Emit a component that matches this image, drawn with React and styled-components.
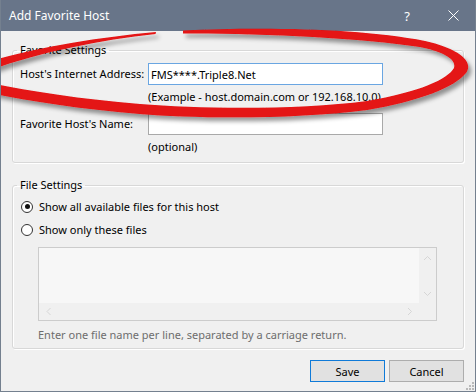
import React from 'react'
import styled, { createGlobalStyle } from 'styled-components'

const GlobalStyle = createGlobalStyle`
  html, body {
    margin: 0;
    padding: 0;
    background: #f0f0f0;
  }
  body {
    font-family: "Noto Sans", "Open Sans", sans-serif;
    font-size: 11px;
    color: #000;
  }
`

const Window = styled.div`
  position: relative;
  width: 476px;
  height: 392px;
  box-sizing: border-box;
  border: 1px solid #74808f;
  border-top: none;
  background: #f0f0f0;
  display: flex;
  flex-direction: column;
  overflow: hidden;
`

const TitleBar = styled.div`
  height: 31px;
  margin: 0 -1px;
  display: flex;
  align-items: center;
  background: #687589;
  color: #fff;
  font-size: 12px;
`

const Title = styled.div`
  flex: 1;
  padding-left: 9px;
`

const CaptionButton = styled.div`
  width: 46px;
  height: 31px;
  display: flex;
  align-items: center;
  justify-content: center;
  font-size: 13px;
`

const Content = styled.div`
  flex: 1;
  display: flex;
  flex-direction: column;
  padding: 12px 11px 0;
`

const Group = styled.fieldset`
  margin: ${p => p.$top || 0}px 0 0;
  padding: ${p => p.$padTop}px 7px ${p => p.$padBottom}px;
  border: 1px solid #d8d8d8;
  border-radius: 3px;
  box-shadow: 1px 1px 0 #fff, inset 1px 1px 0 #fff;
  min-width: 0;
`

const Legend = styled.legend`
  margin-left: -3px;
  padding: 0 3px;
  line-height: 14px;
`

const FormGrid = styled.div`
  display: grid;
  grid-template-columns: 128px 235px;
  align-items: center;
`

const Label = styled.div`
  padding-bottom: 2px;
  margin-top: ${p => p.$top || 0}px;
`

const TextBox = styled.div`
  height: 22px;
  box-sizing: border-box;
  border: 1px solid ${p => (p.$focused ? '#6aa6e2' : '#a9a9a9')};
  background: #fff;
  padding-left: 2px;
  display: flex;
  align-items: center;
  margin-top: ${p => p.$top || 0}px;
`

const Hint = styled.div`
  grid-column: 2;
  line-height: 15px;
  margin-top: 4px;
`

const RadioRow = styled.div`
  height: 17px;
  display: flex;
  align-items: center;
  gap: 6px;
  margin-top: ${p => p.$top || 0}px;
`

const Radio = styled.span`
  position: relative;
  width: 12px;
  height: 12px;
  box-sizing: border-box;
  margin-left: 1px;
  border: 1px solid #333;
  border-radius: 50%;
  background: #fff;

  &::after {
    content: '';
    display: ${p => (p.$checked ? 'block' : 'none')};
    position: absolute;
    left: 2.5px;
    top: 2.5px;
    width: 5px;
    height: 5px;
    border-radius: 50%;
    background: #111;
  }
`

const FileList = styled.div`
  margin: 9px 0 0 18px;
  width: 399px;
  height: 74px;
  box-sizing: border-box;
  border: 1px solid #cccccc;
  background: #f0f0f0;
  display: grid;
  grid-template-columns: 1fr 17px;
  grid-template-rows: 1fr 17px;
`

const ListArea = styled.div`
  background: #f7f7f7;
`

const VScroll = styled.div`
  display: flex;
  flex-direction: column;
  align-items: center;
  justify-content: space-between;
  padding: 7px 0 6px;
`

const HScroll = styled.div`
  display: flex;
  align-items: center;
  justify-content: space-between;
  padding: 0 6px 0 7px;
`

const DisabledNote = styled.div`
  margin-top: 6px;
  margin-left: 18px;
  line-height: 15px;
  color: #6d6d6d;
`

const ButtonRow = styled.div`
  display: flex;
  justify-content: flex-end;
  gap: 4px;
  margin-top: 11px;
`

const Button = styled.div`
  width: 75px;
  height: 22px;
  box-sizing: border-box;
  border: 1px solid ${p => (p.$primary ? '#0f7ad8' : '#adadad')};
  background: #e1e1e1;
  display: flex;
  align-items: center;
  justify-content: center;
`

const Grip = styled.svg`
  position: absolute;
  right: 1px;
  bottom: 1px;
`

const Annotation = styled.svg`
  position: absolute;
  left: -1px;
  top: 0;
  pointer-events: none;
`

const Chevron = ({ dir }) => {
  const paths = {
    up: 'M1 5 L4.5 1.5 L8 5',
    down: 'M1 1 L4.5 4.5 L8 1',
    left: 'M4.5 1 L1 4.5 L4.5 8',
    right: 'M1 1 L4.5 4.5 L1 8',
  }
  const vertical = dir === 'up' || dir === 'down'
  return (
    <svg width={vertical ? 9 : 6} height={vertical ? 6 : 9}>
      <path d={paths[dir]} fill="none" stroke="#d6d6d6" strokeWidth="1" />
    </svg>
  )
}

export default function App() {
  return (
    <>
      <GlobalStyle />
      <Window>
        <TitleBar>
          <Title>Add Favorite Host</Title>
          <CaptionButton>?</CaptionButton>
          <CaptionButton>
            <svg width="11" height="11">
              <path d="M0.5 0.5 L10.5 10.5 M10.5 0.5 L0.5 10.5" stroke="#fff" strokeWidth="1" />
            </svg>
          </CaptionButton>
        </TitleBar>

        <Content>
          <Group $padTop={6} $padBottom={8}>
            <Legend>Favorite Settings</Legend>
            <FormGrid>
              <Label>Host's Internet Address:</Label>
              <TextBox $focused>FMS****.Triple8.Net</TextBox>
              <Hint>(Example - host.domain.com or 192.168.10.0)</Hint>
              <Label $top={9}>Favorite Host's Name:</Label>
              <TextBox $top={9} />
              <Hint>(optional)</Hint>
            </FormGrid>
          </Group>

          <Group $top={15} $padTop={6} $padBottom={6}>
            <Legend>File Settings</Legend>
            <RadioRow>
              <Radio $checked />
              Show all available files for this host
            </RadioRow>
            <RadioRow $top={6}>
              <Radio />
              Show only these files
            </RadioRow>
            <FileList>
              <ListArea />
              <VScroll>
                <Chevron dir="up" />
                <Chevron dir="down" />
              </VScroll>
              <HScroll>
                <Chevron dir="left" />
                <Chevron dir="right" />
              </HScroll>
              <div />
            </FileList>
            <DisabledNote>Enter one file name per line, separated by a carriage return.</DisabledNote>
          </Group>

          <ButtonRow>
            <Button $primary>Save</Button>
            <Button>Cancel</Button>
          </ButtonRow>
        </Content>

        <Grip width="9" height="9">
          <g fill="#b9b9b9">
            <rect x="7" y="1" width="2" height="2" />
            <rect x="4" y="4" width="2" height="2" />
            <rect x="7" y="4" width="2" height="2" />
            <rect x="1" y="7" width="2" height="2" />
            <rect x="4" y="7" width="2" height="2" />
            <rect x="7" y="7" width="2" height="2" />
          </g>
        </Grip>

        <Annotation width="476" height="130" viewBox="0 0 476 130">
          <defs>
            <filter id="penShadow" x="-10%" y="-50%" width="120%" height="200%">
              <feDropShadow dx="3" dy="4" stdDeviation="2" floodColor="#000" floodOpacity="0.4" />
            </filter>
          </defs>
          <g fill="#e41212" filter="url(#penShadow)">
            <path d="M -10 61 C 40 47, 100 37, 156 32 L 155.5 34 C 100 40, 40 52, -10 70 Z" />
            <path d="M 183 30.5 C 260 27, 360 28, 425 41 C 460 49, 474 62, 466 73 C 455 87, 420 101, 367 110 C 300 119, 200 119, 140 114 C 80 109, 30 101, -10 93 L -10 83 C 30 91, 80 99, 140 104 C 200 109, 300 110, 367 101 C 420 92, 448 79, 454 68 C 457 58, 440 51, 420 47 C 360 38, 260 33, 183 33.5 Z" />
          </g>
        </Annotation>
      </Window>
    </>
  )
}
